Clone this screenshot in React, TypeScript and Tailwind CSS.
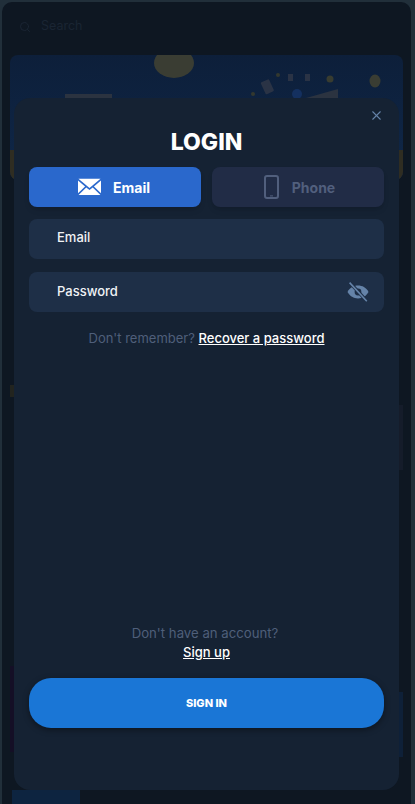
import { Search, X } from "lucide-react"

const font = "font-['Inter','Noto_Sans',sans-serif]"

function MailIcon() {
    return (
        <svg width="23" height="18" viewBox="0 0 24 18" className="block">
            <path d="M0.5 0.5H23.5L12 10Z" fill="#fff" />
            <path d="M0 2.2L7.4 8.4L0 15.6Z" fill="#fff" />
            <path d="M24 2.2L16.6 8.4L24 15.6Z" fill="#fff" />
            <path d="M8.6 9.4L12 12.2L15.4 9.4L23.4 17.4H0.6Z" fill="#fff" />
        </svg>
    )
}

function PhoneIcon() {
    return (
        <svg width="15" height="24" viewBox="0 0 15 24" className="block">
            <rect x="1" y="1" width="13" height="22" rx="2" fill="none" stroke="#515f7d" strokeWidth="2" />
            <rect x="6" y="20.4" width="3" height="1" fill="#515f7d" />
        </svg>
    )
}

function EyeOffIcon() {
    return (
        <svg width="22" height="20" viewBox="0 0 22 20" className="block">
            <path d="M0.5 10C3 5.6 6.6 3.6 11 3.6C15.4 3.6 19 5.6 21.5 10C19 14.4 15.4 16.4 11 16.4C6.6 16.4 3 14.4 0.5 10Z" fill="#6583a8" />
            <circle cx="11" cy="10" r="3.4" fill="#1e2f47" />
            <path d="M3 0.8L19.6 18.8" stroke="#1e2f47" strokeWidth="3.4" />
            <path d="M2.6 0.6L19.8 19.2" stroke="#6583a8" strokeWidth="1.6" />
        </svg>
    )
}

// promo artwork behind the modal: coins and cards flying out of a box
function BannerArt() {
    return (
        <svg width="393" height="125" viewBox="0 0 393 125" className="block">
            <defs>
                <linearGradient id="banner" x1="0" y1="0" x2="0" y2="1">
                    <stop offset="0" stopColor="#0d1f3a" />
                    <stop offset="1" stopColor="#0f2748" />
                </linearGradient>
            </defs>
            <rect width="393" height="125" fill="url(#banner)" />
            <ellipse cx="164" cy="8" rx="20" ry="15" fill="#3a3d33" />
            <rect x="55" y="39" width="47" height="6" fill="#2b3340" />
            <rect x="253" y="25" width="9" height="13" rx="1" transform="rotate(-25 258 32)" fill="#2a3345" />
            <rect x="278" y="19" width="5" height="7" fill="#2a3345" />
            <rect x="295" y="19" width="5" height="7" fill="#2a3345" />
            <circle cx="268" cy="20" r="2" fill="#33382f" />
            <circle cx="243" cy="39" r="2" fill="#33382f" />
            <circle cx="320" cy="24" r="3.5" fill="#383c30" />
            <ellipse cx="365" cy="26" rx="5.5" ry="6.5" fill="#3a3d33" />
            <path d="M296 43L328 34V43Z" fill="#2b3340" />
            <circle cx="287" cy="39" r="5" fill="#14305f" />
            <rect x="0" y="95" width="4" height="30" fill="#2f2d22" />
            <rect x="389" y="95" width="4" height="30" fill="#2f2d22" />
        </svg>
    )
}

function Background() {
    return (
        <div className="h-[804px] pl-[2px] pr-[4px] pt-[2px] bg-[#212f3a]">
            <div className="h-[802px] rounded-t-[10px] bg-[#0e1722] px-2 flex flex-col overflow-hidden">
                <div className="h-[53px] shrink-0 flex items-center gap-[10px] pl-[9px] pb-[4px] text-[#1a2533]">
                    <Search size={12} strokeWidth={2} />
                    <span className="text-[12.5px]">Search</span>
                </div>
                <div className="h-[125px] shrink-0 rounded-lg overflow-hidden">
                    <BannerArt />
                </div>
                <div className="mt-[205px] h-[90px] shrink-0 flex justify-between items-start">
                    <div className="w-10 h-3 bg-[#22241f]" />
                    <div className="mt-5 w-10 h-[65px] bg-[#151c2a]" />
                </div>
                <div className="mt-[191px] h-[91px] shrink-0 flex justify-between items-start">
                    <div className="w-10 h-[86px] bg-[#140f26]" />
                    <div className="mt-[26px] w-10 h-[65px] bg-[#0e2038]" />
                </div>
                <div className="mt-[33px] ml-[2px] w-[68px] h-5 shrink-0 bg-[#0d2440] flex items-end pl-[6px]">
                    <div className="w-[14px] h-[5px] rounded-t-full bg-[#3a3722]" />
                </div>
            </div>
        </div>
    )
}

export default function App() {
    return (
        <div className={`relative w-[415px] h-[804px] overflow-hidden ${font}`}>
            <Background />

            <div className="absolute left-[14px] top-[98px] w-[385px] h-[692px] rounded-[16px] bg-[#152233] px-[15px] flex flex-col">
                <button className="absolute right-[15px] top-[10px] text-[#6583a8]">
                    <X size={15} strokeWidth={1.7} />
                </button>

                <h1 className="mt-[28px] h-[32px] leading-[32px] text-center text-[23px] font-extrabold text-white">LOGIN</h1>

                <div className="mt-[9px] grid grid-cols-2 gap-[11px]">
                    <button className="h-10 rounded-lg bg-[#2a68cc] pr-[2px] flex items-center justify-center gap-[12px] text-white text-[14px] font-bold shadow-md">
                        <MailIcon />
                        Email
                    </button>
                    <button className="h-10 rounded-lg bg-[#212c46] pl-[3px] flex items-center justify-center gap-[13px] text-[#515f7d] text-[14px] font-bold shadow-md">
                        <PhoneIcon />
                        Phone
                    </button>
                </div>

                <div className="mt-3 h-10 rounded-lg bg-[#1e2f47] pl-[28px] pb-[3px] flex items-center text-[13px] font-medium text-[#f0f2f5]">Email</div>

                <div className="mt-[13px] h-10 rounded-lg bg-[#1e2f47] pl-[28px] pr-[15px] flex items-center justify-between text-[13px] font-medium text-[#f0f2f5]">
                    Password
                    <EyeOffIcon />
                </div>

                <p className="mt-[16px] text-center text-[13px] leading-5 text-[#4f5f7a]">
                    Don't remember? <a className="font-medium text-white underline">Recover a password</a>
                </p>

                <div className="mt-auto text-center text-[13px] leading-5">
                    <p className="pr-[3px] translate-y-[1px] text-[13.2px] text-[#4f5f7a]">Don't have an account?</p>
                    <a className="font-medium text-white underline">Sign up</a>
                </div>

                <button className="mt-[16px] mb-[62px] h-[50px] rounded-[22px] bg-[#1a76d6] text-white text-[11px] font-extrabold shadow-[0_2px_6px_rgba(0,0,0,0.4)]">
                    SIGN IN
                </button>
            </div>
        </div>
    )
}
